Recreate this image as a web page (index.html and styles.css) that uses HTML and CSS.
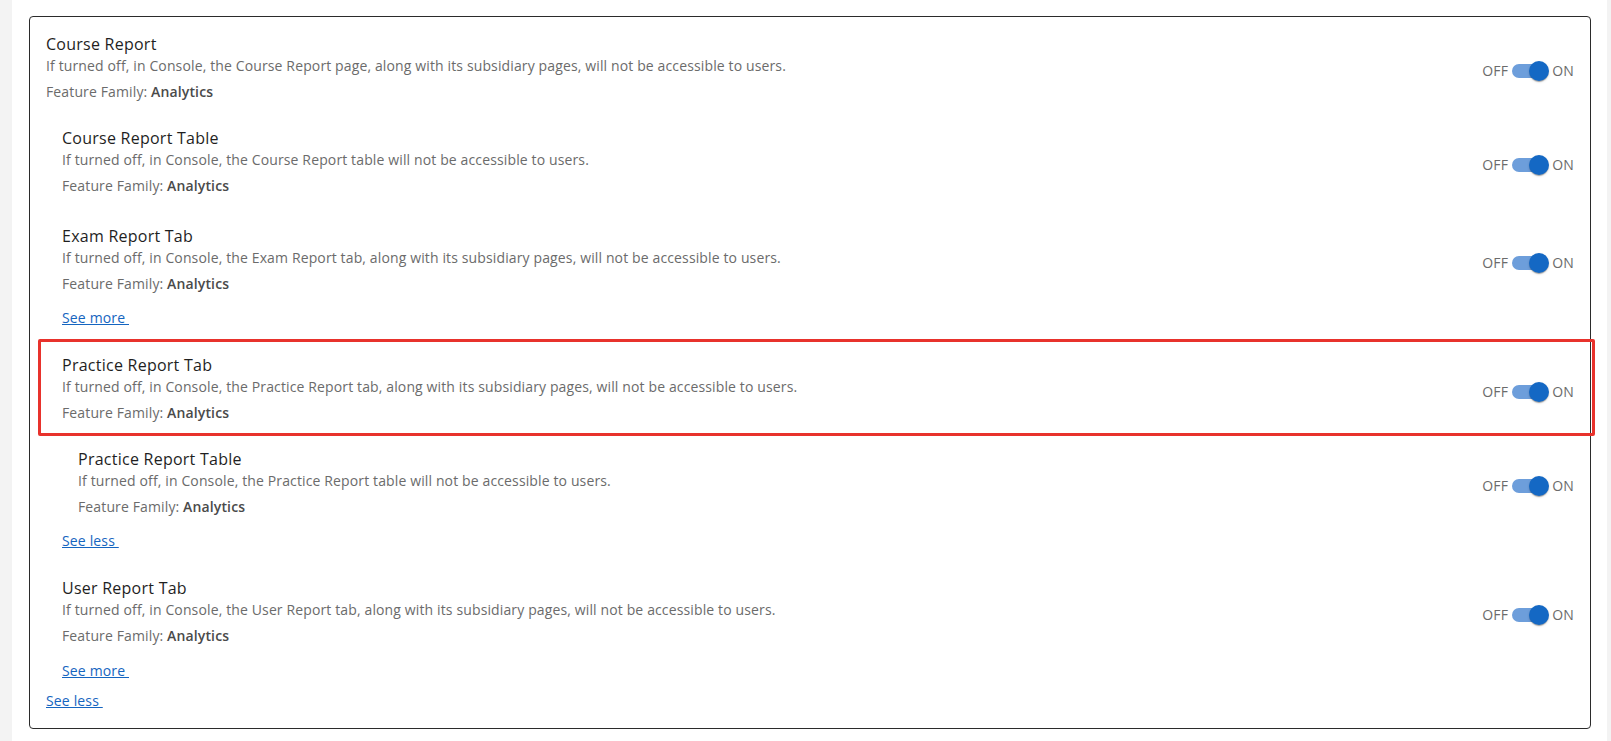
FILE: index.html
```html
<!DOCTYPE html>
<html lang="en">
<head>
<meta charset="utf-8">
<title>Feature toggles</title>
<link rel="stylesheet" href="styles.css">
</head>
<body>
<div class="page">
  <div class="panel">
    <div class="card">

      <div class="row lvl0">
        <div class="info">
          <div class="title">Course Report</div>
          <div class="desc">If turned off, in Console, the Course Report page, along with its subsidiary pages, will not be accessible to users.</div>
          <div class="family">Feature Family: <b>Analytics</b></div>
        </div>
        <div class="switch"><span class="lbl">OFF</span><span class="sw"><span class="track"></span><span class="knob"></span></span><span class="lbl on">ON</span></div>
      </div>

      <div class="row lvl1 gap-a">
        <div class="info">
          <div class="title">Course Report Table</div>
          <div class="desc">If turned off, in Console, the Course Report table will not be accessible to users.</div>
          <div class="family">Feature Family: <b>Analytics</b></div>
        </div>
        <div class="switch"><span class="lbl">OFF</span><span class="sw"><span class="track"></span><span class="knob"></span></span><span class="lbl on">ON</span></div>
      </div>

      <div class="row lvl1 gap-b">
        <div class="info">
          <div class="title">Exam Report Tab</div>
          <div class="desc">If turned off, in Console, the Exam Report tab, along with its subsidiary pages, will not be accessible to users.</div>
          <div class="family">Feature Family: <b>Analytics</b></div>
        </div>
        <div class="switch"><span class="lbl">OFF</span><span class="sw"><span class="track"></span><span class="knob"></span></span><span class="lbl on">ON</span></div>
      </div>

      <a class="link lvl1 link-after" href="#">See more </a>

      <div class="row lvl1 gap-c highlight">
        <div class="info">
          <div class="title">Practice Report Tab</div>
          <div class="desc">If turned off, in Console, the Practice Report tab, along with its subsidiary pages, will not be accessible to users.</div>
          <div class="family">Feature Family: <b>Analytics</b></div>
        </div>
        <div class="switch"><span class="lbl">OFF</span><span class="sw"><span class="track"></span><span class="knob"></span></span><span class="lbl on">ON</span></div>
      </div>

      <div class="row lvl2 gap-e">
        <div class="info">
          <div class="title">Practice Report Table</div>
          <div class="desc">If turned off, in Console, the Practice Report table will not be accessible to users.</div>
          <div class="family">Feature Family: <b>Analytics</b></div>
        </div>
        <div class="switch"><span class="lbl">OFF</span><span class="sw"><span class="track"></span><span class="knob"></span></span><span class="lbl on">ON</span></div>
      </div>

      <a class="link lvl1 link-after" href="#">See less </a>

      <div class="row lvl1 gap-d">
        <div class="info">
          <div class="title">User Report Tab</div>
          <div class="desc">If turned off, in Console, the User Report tab, along with its subsidiary pages, will not be accessible to users.</div>
          <div class="family">Feature Family: <b>Analytics</b></div>
        </div>
        <div class="switch"><span class="lbl">OFF</span><span class="sw"><span class="track"></span><span class="knob"></span></span><span class="lbl on">ON</span></div>
      </div>

      <a class="link lvl1 link-after2" href="#">See more </a>
      <a class="link lvl0 link-last" href="#">See less </a>

    </div>
  </div>
</div>
</body>
</html>
```

FILE: styles.css
```css
* { box-sizing: border-box; }

html, body {
  margin: 0;
  padding: 0;
  height: 100%;
}

body {
  background: #f3f3f3;
  font-family: "Open Sans", "Noto Sans", "Liberation Sans", sans-serif;
  color: #212121;
  overflow: hidden;
}

.page {
  height: 741px;
  padding: 0 4px 0 12px;
}

.panel {
  background: #ffffff;
  height: 100%;
  padding: 16px 16px 0 17px;
}

.card {
  border: 1px solid #2b2b2b;
  border-radius: 4px;
  padding: 16px 16px 17px 16px;
  display: flex;
  flex-direction: column;
  align-items: stretch;
}

.row {
  display: flex;
  align-items: center;
  justify-content: space-between;
  position: relative;
}

.lvl1 { margin-left: 16px; }
.lvl2 { margin-left: 32px; }

.gap-a { margin-top: 25px; }
.gap-b { margin-top: 29px; }
.gap-c { margin-top: 26px; }
.gap-e { margin-top: 25px; }
.gap-d { margin-top: 26px; }

.info {
  display: flex;
  flex-direction: column;
}

.title {
  font-size: 16px;
  line-height: 23px;
  letter-spacing: 0.25px;
  color: #1f1f1f;
}

.desc {
  font-size: 14px;
  line-height: 20px;
  letter-spacing: 0.13px;
  color: #6b6b6b;
}

.family {
  font-size: 14px;
  line-height: 20px;
  letter-spacing: 0.13px;
  margin-top: 6px;
  color: #6b6b6b;
}

.family b {
  font-weight: 600;
  color: #4a4a4a;
}

.switch {
  display: flex;
  align-items: center;
  margin-top: 6px;
  font-size: 14px;
  line-height: 20px;
  letter-spacing: 0.2px;
  color: #6b6b6b;
}

.lbl { display: block; }
.lbl.on { margin-left: 3px; }

.sw {
  position: relative;
  width: 37px;
  height: 20px;
  margin-left: 4px;
  display: block;
}

.track {
  position: absolute;
  left: 0;
  top: 3px;
  width: 34px;
  height: 14px;
  border-radius: 7px;
  background: #6d9edb;
}

.knob {
  position: absolute;
  left: 17px;
  top: 0;
  width: 20px;
  height: 20px;
  border-radius: 50%;
  background: #1468c4;
  box-shadow: 0 2px 1px -1px rgba(0,0,0,0.2), 0 1px 1px 0 rgba(0,0,0,0.14), 0 1px 3px 0 rgba(0,0,0,0.12);
}

.link {
  align-self: flex-start;
  font-size: 14px;
  line-height: 20px;
  letter-spacing: 0.15px;
  color: #1565c0;
  text-decoration: underline;
  white-space: pre;
}

.link-after { margin-top: 14px; }
.link-after2 { margin-top: 15px; }
.link-last { margin-top: 10px; }

.highlight::after {
  content: "";
  position: absolute;
  left: -24px;
  right: -21px;
  top: -15px;
  bottom: -13px;
  border: 3px solid #e8322c;
  border-radius: 2px;
  pointer-events: none;
}
```
